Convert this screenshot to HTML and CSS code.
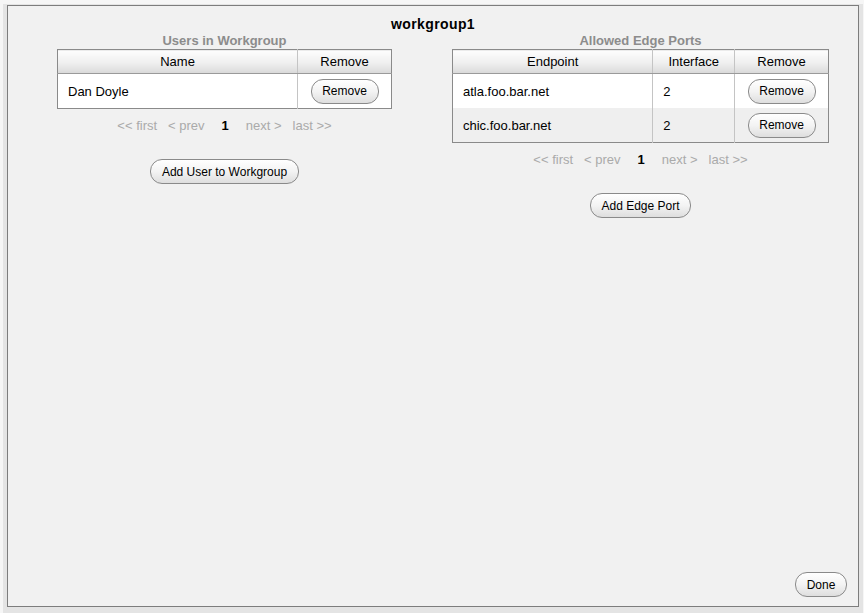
FILE: index.html
```html
<!DOCTYPE html>
<html>
<head>
<meta charset="utf-8">
<link rel="stylesheet" href="styles.css">
</head>
<body>
<div class="panel">
  <div class="title">workgroup1</div>
  <div class="sections">
    <div class="section section-users">
      <div class="section-title">Users in Workgroup</div>
      <table class="grid">
        <colgroup><col class="c-name"><col class="c-remove"></colgroup>
        <thead>
          <tr><th>Name</th><th>Remove</th></tr>
        </thead>
        <tbody>
          <tr><td class="text">Dan Doyle</td><td class="action"><button class="btn">Remove</button></td></tr>
        </tbody>
      </table>
      <div class="pager">
        <span class="pg">&lt;&lt; first</span>
        <span class="pg">&lt; prev</span>
        <span class="pg current">1</span>
        <span class="pg">next &gt;</span>
        <span class="pg">last &gt;&gt;</span>
      </div>
      <button class="btn add">Add User to Workgroup</button>
    </div>
    <div class="section section-ports">
      <div class="section-title">Allowed Edge Ports</div>
      <table class="grid">
        <colgroup><col class="c-endpoint"><col class="c-iface"><col class="c-remove"></colgroup>
        <thead>
          <tr><th>Endpoint</th><th>Interface</th><th>Remove</th></tr>
        </thead>
        <tbody>
          <tr><td class="text">atla.foo.bar.net</td><td class="text">2</td><td class="action"><button class="btn">Remove</button></td></tr>
          <tr class="alt"><td class="text">chic.foo.bar.net</td><td class="text">2</td><td class="action"><button class="btn">Remove</button></td></tr>
        </tbody>
      </table>
      <div class="pager">
        <span class="pg">&lt;&lt; first</span>
        <span class="pg">&lt; prev</span>
        <span class="pg current">1</span>
        <span class="pg">next &gt;</span>
        <span class="pg">last &gt;&gt;</span>
      </div>
      <button class="btn add">Add Edge Port</button>
    </div>
  </div>
  <div class="footer">
    <button class="btn done">Done</button>
  </div>
</div>
</body>
</html>
```
FILE: styles.css
```css
html, body {
  margin: 0;
  padding: 0;
}
body {
  background: #f6f6f6;
  font-family: "Liberation Sans", Arial, sans-serif;
  color: #000;
  width: 864px;
  height: 613px;
  overflow: hidden;
}
.panel {
  box-sizing: border-box;
  margin: 5px 0 0 7px;
  width: 852px;
  height: 602px;
  background: #f1f1f1;
  border: 1px solid #7d7d7d;
  box-shadow: 0 3px 0 4px #e4e4e4;
  display: flex;
  flex-direction: column;
}
.title {
  text-align: center;
  font-weight: bold;
  font-size: 14px;
  letter-spacing: 0.4px;
  line-height: 16px;
  padding-top: 10px;
}
.sections {
  display: flex;
  align-items: flex-start;
  padding-left: 49px;
  gap: 60px;
}
.section {
  display: flex;
  flex-direction: column;
  align-items: center;
}
.section-users { width: 335px; }
.section-ports { width: 377px; }
.section-title {
  font-size: 13px;
  font-weight: bold;
  color: #8c8c8c;
  line-height: 15px;
  margin-top: 1px;
  margin-bottom: 1px;
}
.grid {
  border-collapse: collapse;
  width: 100%;
  border: 1px solid #8a8a8a;
  background: #fff;
  font-size: 13px;
}
.c-name { width: 241px; }
.c-endpoint { width: 201px; }
.c-iface { width: 82px; }
.c-remove { width: 94px; }
.grid th {
  font-weight: normal;
  height: 23px;
  padding: 0;
  background: linear-gradient(to bottom, #fdfdfd 0%, #efefef 55%, #d9d9d9 100%);
  border-bottom: 1px solid #9a9a9a;
  border-left: 1px solid #c4c4c4;
  text-align: center;
}
.grid td {
  height: 34px;
  padding: 0;
  border-left: 1px solid #c4c4c4;
}
.grid th:first-child, .grid td:first-child { border-left: none; }
.grid td.text { padding-left: 10px; }
.grid td.action { text-align: center; }
.grid tr.alt td { background: #efefef; }
.btn {
  font-family: "Liberation Sans", Arial, sans-serif;
  font-size: 12px;
  color: #000;
  height: 25px;
  padding: 0 11px;
  border: 1px solid #8a8a8a;
  border-radius: 12px;
  background: linear-gradient(to bottom, #ffffff 0%, #f3f3f3 50%, #dedede 100%);
  box-sizing: border-box;
  cursor: pointer;
}
.grid .btn { width: 68px; padding: 0; }
.pager {
  font-size: 13px;
  color: #aaaaaa;
  line-height: 15px;
  margin-top: 9px;
  display: flex;
  gap: 11px;
}
.pg.current {
  color: #000;
  font-weight: bold;
  margin: 0 6px;
}
.add {
  margin-top: 26px;
}
.section-users .add { width: 149px; padding: 0; }
.section-ports .add { width: 101px; padding: 0; }
.footer {
  margin-top: auto;
  display: flex;
  justify-content: flex-end;
  padding: 0 11px 9px 0;
}
.done { width: 52px; padding: 0; }
```
